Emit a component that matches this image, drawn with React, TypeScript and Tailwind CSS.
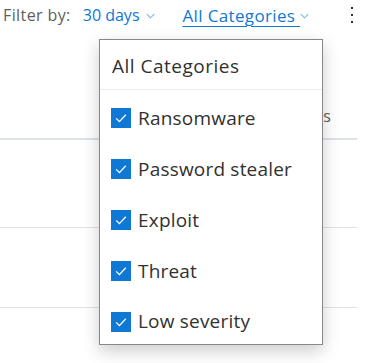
import React from "react";

const Chevron = ({ className = "" }: { className?: string }) => (
  <svg width="9" height="6" viewBox="0 0 9 6" className={className} fill="none">
    <path d="M0.8 1.2 L4.5 4.8 L8.2 1.2" stroke="#7fb3e6" strokeWidth="1.1" />
  </svg>
);

const Check = () => (
  <span className="flex h-[20px] w-[20px] shrink-0 items-center justify-center bg-[#0f78d4]">
    <svg width="20" height="20" viewBox="0 0 20 20" fill="none">
      <path d="M5.2 10.4 L8.4 13.6 L14.8 6.8" stroke="#ffffff" strokeWidth="1.3" />
    </svg>
  </span>
);

const items = ["Ransomware", "Password stealer", "Exploit", "Threat", "Low severity"];

export default function App() {
  return (
    <div
      className="relative h-[363px] w-[368px] overflow-hidden bg-white text-[#323130]"
      style={{ fontFamily: '"Open Sans", "Noto Sans", sans-serif' }}
    >
      {/* Top bar */}
      <div className="flex h-[30px] items-center pl-[3px] text-[16px] leading-none">
        <span className="tracking-[0.4px] text-[#605e5c]">Filter by:</span>
        <span className="ml-[12px] text-[#0f78d4]">30 days</span>
        <Chevron className="ml-[6px] mt-[2px]" />
        <span className="ml-[28px] text-[17px] tracking-[0.35px] text-[#0f78d4] underline decoration-1 underline-offset-[4px]">All Categories&nbsp;</span>
        <Chevron className="ml-[0px] mt-[2px]" />
        <div className="ml-auto mr-[15px] flex flex-col items-center gap-[5px]">
          <span className="h-[2px] w-[2px] bg-[#323130]" />
          <span className="h-[2px] w-[2px] bg-[#323130]" />
          <span className="h-[2px] w-[2px] bg-[#323130]" />
        </div>
      </div>

      {/* Background table */}
      <div className="mr-[11px]">
        <div className="flex h-[110px] items-end justify-end border-b-2 border-[#dde1e8] pb-[10px] pr-[26px] text-[16px] text-[#605e5c]">
          Devices
        </div>
        <div className="h-[88px] border-b border-[#dde1e8]" />
        <div className="h-[80px] border-b border-[#dde1e8]" />
      </div>

      {/* Dropdown menu */}
      <div className="absolute left-[99px] top-[39px] flex h-[306px] w-[224px] flex-col border border-[#8a8886] bg-white shadow-[0_6px_16px_rgba(0,0,0,0.2)]">
        <div className="flex h-[50px] items-center border-b border-[#edebe9] pl-[12px] pt-[3px] text-[19px] tracking-[0.5px]">
          All Categories
        </div>
        <div className="flex flex-1 flex-col">
          {items.map((it) => (
            <div key={it} className="flex flex-1 items-center pl-[11px] pt-[6px] text-[19px] tracking-[0.2px]">
              <Check />
              <span className="ml-[7px]">{it}</span>
            </div>
          ))}
        </div>
      </div>
    </div>
  );
}
